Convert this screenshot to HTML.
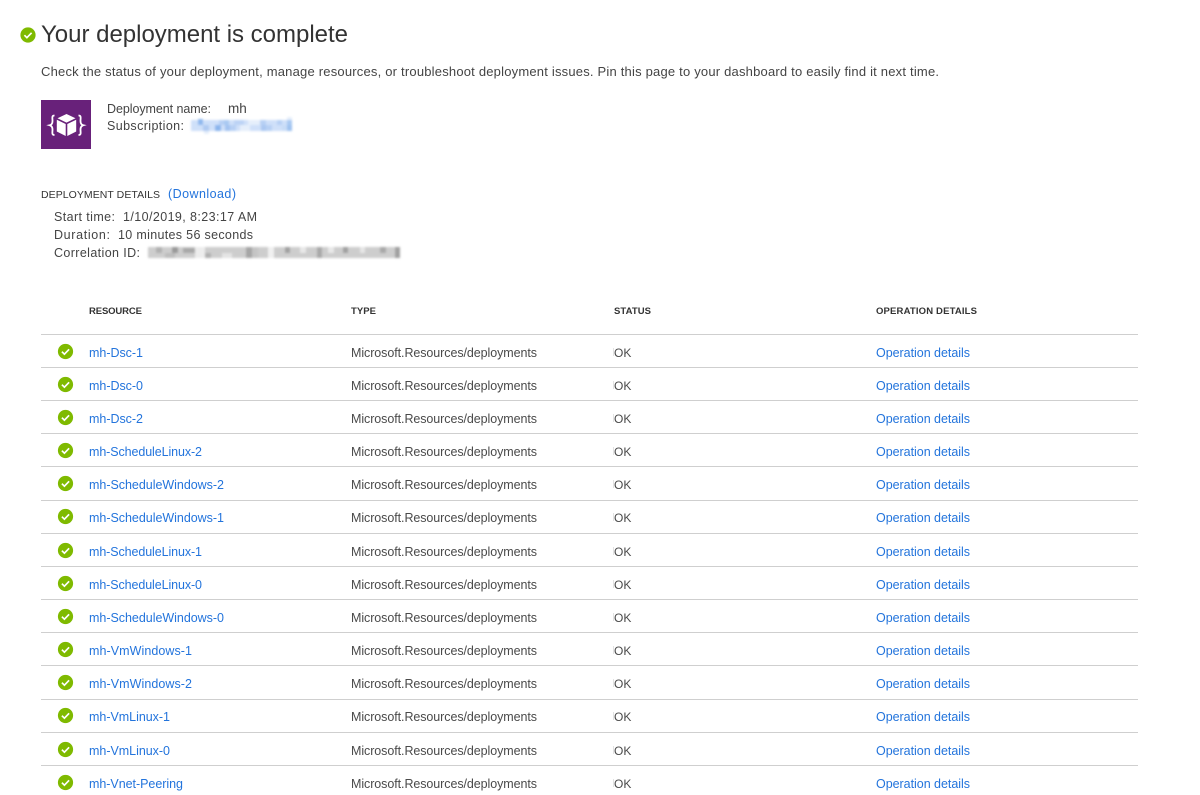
<!DOCTYPE html>
<html><head><meta charset="utf-8"><title>Your deployment is complete</title>
<style>
html,body{margin:0;padding:0;background:#fff;width:1200px;height:795px;overflow:hidden}
svg{display:block}
text{font-family:"Liberation Sans",sans-serif;font-size:12.5px;fill:#444}
.l{fill:#2374dc}
.h{font-size:9.5px;font-weight:bold;fill:#333}
.t{fill:#4a4a4a}
.k{font-size:12px;fill:#4a4a4a}
</style></head><body>
<svg width="1200" height="795" viewBox="0 0 1200 795" xmlns="http://www.w3.org/2000/svg">
<defs>
<g id="c"><circle cx="0" cy="0" r="7.6" fill="#7fba00"/><path d="M-3.6 0.2L-1.1 2.7L3.6-2.2" fill="none" stroke="#fff" stroke-width="1.700"/></g>
<filter id="b" x="-5%" y="-30%" width="110%" height="160%"><feGaussianBlur stdDeviation="1"/></filter>
</defs>
<use href="#c" x="28" y="35" />
<text x="41" y="42" textLength="307" lengthAdjust="spacing" style="font-size:24px;fill:#333">Your deployment is complete</text>
<text x="41" y="76" textLength="898" lengthAdjust="spacing" style="font-size:13px">Check the status of your deployment, manage resources, or troubleshoot deployment issues. Pin this page to your dashboard to easily find it next time.</text>
<rect x="41" y="100" width="50" height="49" fill="#68217a"/>
<path d="M66.500 114L57.500 118.300L66.500 122.600L75.500 118.300Z" fill="#fff"/>
<path d="M56.800 119.800L65.700 124V136L56.800 131.500Z" fill="#fff"/>
<path d="M76.200 119.800L67.300 124V136L76.200 131.500Z" fill="#fff"/>
<path d="M54.500 115.500C51.500 115.500 52.500 118 52.500 121C52.500 123.500 51.500 124.800 49.800 125.200C51.500 125.700 52.500 127 52.500 129.500C52.500 132.500 51.500 135 54.500 135" fill="none" stroke="#fff" stroke-width="1.800"/>
<path d="M78.500 115.500C81.500 115.500 80.500 118 80.500 121C80.500 123.500 81.500 124.800 83.200 125.200C81.500 125.700 80.500 127 80.500 129.500C80.500 132.500 81.500 135 78.500 135" fill="none" stroke="#fff" stroke-width="1.800"/>
<text x="107" y="113" textLength="104" lengthAdjust="spacing">Deployment name:</text>
<text x="228" y="113" style="font-size:13.500px">mh</text>
<text x="107" y="130" textLength="77" lengthAdjust="spacing">Subscription:</text>
<g fill="#a9c9f2" filter="url(#b)">
<rect x="191" y="120" width="101" height="11" fill="#cfe0f9"/>
<rect x="198" y="119" width="5" height="6" fill="#8fb8ee"/><rect x="219" y="120" width="6" height="5" fill="#b7d0f4"/><rect x="224" y="120" width="5" height="5" fill="#a9c9f2"/><rect x="234" y="120" width="10" height="5" fill="#bcd3f5"/><rect x="248" y="120" width="12" height="5" fill="#e6effb"/><rect x="260" y="120" width="6" height="5" fill="#b7d0f4"/><rect x="277" y="120" width="5" height="5" fill="#b7d0f4"/><rect x="287" y="120" width="5" height="5" fill="#a9c9f2"/>
<rect x="203" y="125" width="6" height="6" fill="#b0cbf2"/><rect x="215" y="125" width="6" height="6" fill="#8bb5ed"/><rect x="225" y="125" width="5" height="6" fill="#a4c4f1"/><rect x="230" y="125" width="6" height="6" fill="#b7d0f4"/><rect x="240" y="125" width="10" height="6" fill="#e6effb"/><rect x="261" y="125" width="5" height="6" fill="#abc8f2"/><rect x="266" y="125" width="6" height="6" fill="#b7d0f4"/><rect x="282" y="125" width="5" height="6" fill="#c8dcf7"/><rect x="287" y="125" width="5" height="6" fill="#9fc2f0"/>
<rect x="204" y="131" width="5" height="3" fill="#e6effb"/><rect x="287" y="117" width="5" height="3" fill="#e6effb"/>
</g>
<text x="41" y="198" textLength="119" lengthAdjust="spacing" style="font-size:10.5px;fill:#333">DEPLOYMENT DETAILS</text>
<text x="168" y="198" textLength="68" lengthAdjust="spacing" class="l">(Download)</text>
<text x="54" y="221" textLength="61" lengthAdjust="spacing">Start time:</text>
<text x="123" y="221" textLength="134" lengthAdjust="spacing">1/10/2019, 8:23:17 AM</text>
<text x="54" y="239" textLength="56" lengthAdjust="spacing">Duration:</text>
<text x="118" y="239" textLength="135" lengthAdjust="spacing">10 minutes 56 seconds</text>
<text x="54" y="257" textLength="86" lengthAdjust="spacing">Correlation ID:</text>
<g fill="#b0b0b0" filter="url(#b)">
<rect x="148" y="247" width="252" height="11" fill="#cdcdcd"/>
<rect x="156" y="247" width="6" height="6"/><rect x="172" y="247" width="6" height="6" fill="#999"/><rect x="183" y="248" width="12" height="5" fill="#a8a8a8"/><rect x="195" y="247" width="10" height="11" fill="#ededed"/><rect x="205" y="253" width="6" height="5"/><rect x="246" y="247" width="6" height="11" fill="#a5a5a5"/><rect x="252" y="247" width="6" height="11" fill="#c5c5c5"/><rect x="268" y="247" width="6" height="11" fill="#f0f0f0"/>
<rect x="285" y="247" width="5" height="6" fill="#a0a0a0"/><rect x="300" y="247" width="6" height="6" fill="#e8e8e8"/><rect x="317" y="247" width="5" height="11" fill="#a8a8a8"/><rect x="328" y="247" width="6" height="6" fill="#e8e8e8"/><rect x="343" y="247" width="5" height="6" fill="#a0a0a0"/><rect x="360" y="247" width="5" height="6" fill="#e6e6e6"/><rect x="380" y="247" width="6" height="6" fill="#a8a8a8"/><rect x="395" y="247" width="5" height="11" fill="#a0a0a0"/><rect x="165" y="253" width="10" height="5" fill="#bdbdbd"/><rect x="222" y="253" width="10" height="5" fill="#e4e4e4"/>
</g>
<text x="89" y="314" textLength="53" lengthAdjust="spacing" class="h">RESOURCE</text>
<text x="351" y="314" textLength="25" lengthAdjust="spacing" class="h">TYPE</text>
<text x="614" y="314" textLength="37" lengthAdjust="spacing" class="h">STATUS</text>
<text x="876" y="314" textLength="101" lengthAdjust="spacing" class="h">OPERATION DETAILS</text>
<g fill="#cfcfcf">
<rect x="41" y="334" width="1097" height="1"/><rect x="41" y="367" width="1097" height="1"/><rect x="41" y="400" width="1097" height="1"/><rect x="41" y="433" width="1097" height="1"/><rect x="41" y="466" width="1097" height="1"/><rect x="41" y="500" width="1097" height="1"/><rect x="41" y="533" width="1097" height="1"/><rect x="41" y="566" width="1097" height="1"/><rect x="41" y="599" width="1097" height="1"/><rect x="41" y="632" width="1097" height="1"/><rect x="41" y="665" width="1097" height="1"/><rect x="41" y="699" width="1097" height="1"/><rect x="41" y="732" width="1097" height="1"/><rect x="41" y="765" width="1097" height="1"/>
</g>
<g fill="#e2e2e2"><rect x="613" y="348" width="1" height="8"/><rect x="613" y="381" width="1" height="8"/><rect x="613" y="414" width="1" height="8"/><rect x="613" y="447" width="1" height="8"/><rect x="613" y="480" width="1" height="8"/><rect x="613" y="513" width="1" height="8"/><rect x="613" y="547" width="1" height="8"/><rect x="613" y="580" width="1" height="8"/><rect x="613" y="613" width="1" height="8"/><rect x="613" y="646" width="1" height="8"/><rect x="613" y="679" width="1" height="8"/><rect x="613" y="712" width="1" height="8"/><rect x="613" y="746" width="1" height="8"/><rect x="613" y="779" width="1" height="8"/></g>
<use href="#c" x="65.500" y="351.500"/><text x="89" y="357" textLength="54" lengthAdjust="spacing" class="l">mh-Dsc-1</text><text x="351" y="357" textLength="186" lengthAdjust="spacing" class="t">Microsoft.Resources/deployments</text><text x="614" y="357" class="k">OK</text><text x="876" y="357" textLength="94" lengthAdjust="spacing" class="l">Operation details</text>
<use href="#c" x="65.500" y="384.500"/><text x="89" y="390" textLength="54" lengthAdjust="spacing" class="l">mh-Dsc-0</text><text x="351" y="390" textLength="186" lengthAdjust="spacing" class="t">Microsoft.Resources/deployments</text><text x="614" y="390" class="k">OK</text><text x="876" y="390" textLength="94" lengthAdjust="spacing" class="l">Operation details</text>
<use href="#c" x="65.500" y="417.500"/><text x="89" y="423" textLength="54" lengthAdjust="spacing" class="l">mh-Dsc-2</text><text x="351" y="423" textLength="186" lengthAdjust="spacing" class="t">Microsoft.Resources/deployments</text><text x="614" y="423" class="k">OK</text><text x="876" y="423" textLength="94" lengthAdjust="spacing" class="l">Operation details</text>
<use href="#c" x="65.500" y="450.500"/><text x="89" y="456" textLength="113" lengthAdjust="spacing" class="l">mh-ScheduleLinux-2</text><text x="351" y="456" textLength="186" lengthAdjust="spacing" class="t">Microsoft.Resources/deployments</text><text x="614" y="456" class="k">OK</text><text x="876" y="456" textLength="94" lengthAdjust="spacing" class="l">Operation details</text>
<use href="#c" x="65.500" y="483.500"/><text x="89" y="489" textLength="135" lengthAdjust="spacing" class="l">mh-ScheduleWindows-2</text><text x="351" y="489" textLength="186" lengthAdjust="spacing" class="t">Microsoft.Resources/deployments</text><text x="614" y="489" class="k">OK</text><text x="876" y="489" textLength="94" lengthAdjust="spacing" class="l">Operation details</text>
<use href="#c" x="65.500" y="516.500"/><text x="89" y="522" textLength="135" lengthAdjust="spacing" class="l">mh-ScheduleWindows-1</text><text x="351" y="522" textLength="186" lengthAdjust="spacing" class="t">Microsoft.Resources/deployments</text><text x="614" y="522" class="k">OK</text><text x="876" y="522" textLength="94" lengthAdjust="spacing" class="l">Operation details</text>
<use href="#c" x="65.500" y="550.500"/><text x="89" y="556" textLength="113" lengthAdjust="spacing" class="l">mh-ScheduleLinux-1</text><text x="351" y="556" textLength="186" lengthAdjust="spacing" class="t">Microsoft.Resources/deployments</text><text x="614" y="556" class="k">OK</text><text x="876" y="556" textLength="94" lengthAdjust="spacing" class="l">Operation details</text>
<use href="#c" x="65.500" y="583.500"/><text x="89" y="589" textLength="113" lengthAdjust="spacing" class="l">mh-ScheduleLinux-0</text><text x="351" y="589" textLength="186" lengthAdjust="spacing" class="t">Microsoft.Resources/deployments</text><text x="614" y="589" class="k">OK</text><text x="876" y="589" textLength="94" lengthAdjust="spacing" class="l">Operation details</text>
<use href="#c" x="65.500" y="616.500"/><text x="89" y="622" textLength="135" lengthAdjust="spacing" class="l">mh-ScheduleWindows-0</text><text x="351" y="622" textLength="186" lengthAdjust="spacing" class="t">Microsoft.Resources/deployments</text><text x="614" y="622" class="k">OK</text><text x="876" y="622" textLength="94" lengthAdjust="spacing" class="l">Operation details</text>
<use href="#c" x="65.500" y="649.500"/><text x="89" y="655" textLength="103" lengthAdjust="spacing" class="l">mh-VmWindows-1</text><text x="351" y="655" textLength="186" lengthAdjust="spacing" class="t">Microsoft.Resources/deployments</text><text x="614" y="655" class="k">OK</text><text x="876" y="655" textLength="94" lengthAdjust="spacing" class="l">Operation details</text>
<use href="#c" x="65.500" y="682.500"/><text x="89" y="688" textLength="103" lengthAdjust="spacing" class="l">mh-VmWindows-2</text><text x="351" y="688" textLength="186" lengthAdjust="spacing" class="t">Microsoft.Resources/deployments</text><text x="614" y="688" class="k">OK</text><text x="876" y="688" textLength="94" lengthAdjust="spacing" class="l">Operation details</text>
<use href="#c" x="65.500" y="715.500"/><text x="89" y="721" textLength="81" lengthAdjust="spacing" class="l">mh-VmLinux-1</text><text x="351" y="721" textLength="186" lengthAdjust="spacing" class="t">Microsoft.Resources/deployments</text><text x="614" y="721" class="k">OK</text><text x="876" y="721" textLength="94" lengthAdjust="spacing" class="l">Operation details</text>
<use href="#c" x="65.500" y="749.500"/><text x="89" y="755" textLength="81" lengthAdjust="spacing" class="l">mh-VmLinux-0</text><text x="351" y="755" textLength="186" lengthAdjust="spacing" class="t">Microsoft.Resources/deployments</text><text x="614" y="755" class="k">OK</text><text x="876" y="755" textLength="94" lengthAdjust="spacing" class="l">Operation details</text>
<use href="#c" x="65.500" y="782.500"/><text x="89" y="788" textLength="94" lengthAdjust="spacing" class="l">mh-Vnet-Peering</text><text x="351" y="788" textLength="186" lengthAdjust="spacing" class="t">Microsoft.Resources/deployments</text><text x="614" y="788" class="k">OK</text><text x="876" y="788" textLength="94" lengthAdjust="spacing" class="l">Operation details</text>
</svg>
</body></html>
